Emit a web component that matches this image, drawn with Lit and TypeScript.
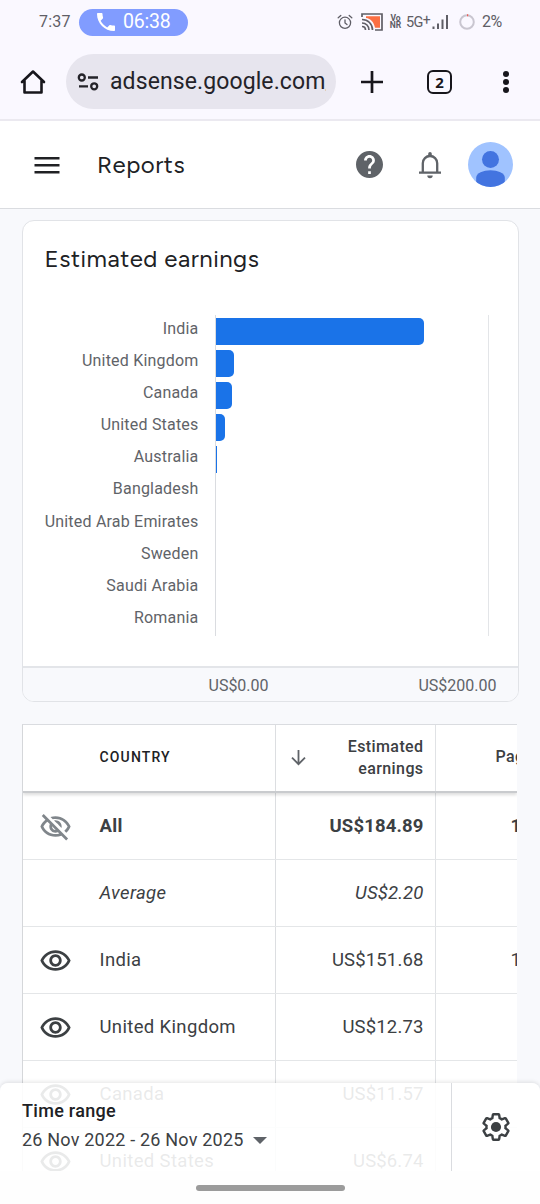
import { LitElement, html, css, svg } from "lit";
import { customElement } from "lit/decorators.js";

const EYE = "M12 6c3.79 0 7.17 2.13 8.82 5.5C19.17 14.87 15.79 17 12 17s-7.17-2.13-8.82-5.5C4.83 8.13 8.21 6 12 6m0-2C7 4 2.73 7.11 1 11.5 2.73 15.89 7 19 12 19s9.27-3.11 11-7.5C21.27 7.11 17 4 12 4zm0 5c1.38 0 2.5 1.12 2.5 2.5S13.38 14 12 14s-2.5-1.12-2.5-2.5S10.62 9 12 9m0-2c-2.48 0-4.5 2.02-4.5 4.5S9.52 16 12 16s4.5-2.02 4.5-4.5S14.48 7 12 7z";
const EYE_OFF = "M12 6c3.79 0 7.17 2.13 8.82 5.5-.59 1.22-1.42 2.27-2.41 3.12l1.41 1.41c1.39-1.23 2.49-2.77 3.18-4.53C21.27 7.11 17 4 12 4c-1.27 0-2.49.2-3.64.57l1.65 1.65C10.66 6.09 11.32 6 12 6zm-1.07 1.14L13 9.21c.57.25 1.03.71 1.28 1.28l2.07 2.07c.08-.34.14-.7.14-1.07C16.5 9.01 14.48 7 12 7c-.37 0-.72.05-1.07.14zM2.01 3.87l2.68 2.68C3.06 7.83 1.77 9.53 1 11.5 2.73 15.89 7 19 12 19c1.52 0 2.98-.29 4.32-.82l3.42 3.42 1.41-1.41L3.42 2.45 2.01 3.87zm7.5 7.5l2.61 2.61c-.04.01-.08.02-.12.02-1.38 0-2.5-1.12-2.5-2.5 0-.05.01-.08.01-.13zm-3.4-3.4l1.75 1.75c-.23.55-.36 1.15-.36 1.78 0 2.48 2.02 4.5 4.5 4.5.63 0 1.23-.13 1.77-.36l.98.98c-.88.24-1.8.38-2.75.38-3.79 0-7.17-2.13-8.82-5.5.7-1.43 1.72-2.61 2.93-3.53z";
const GEAR = "M19.43 12.98c.04-.32.07-.64.07-.98 0-.34-.03-.66-.07-.98l2.11-1.65c.19-.15.24-.42.12-.64l-2-3.46c-.09-.16-.26-.25-.44-.25-.06 0-.12.01-.17.03l-2.49 1c-.52-.4-1.08-.73-1.69-.98l-.38-2.65C14.46 2.18 14.25 2 14 2h-4c-.25 0-.46.18-.49.42l-.38 2.65c-.61.25-1.17.59-1.69.98l-2.49-1c-.06-.02-.12-.03-.18-.03-.17 0-.34.09-.43.25l-2 3.46c-.13.22-.07.49.12.64l2.11 1.65c-.04.32-.07.65-.07.98 0 .33.03.66.07.98l-2.11 1.65c-.19.15-.24.42-.12.64l2 3.46c.09.16.26.25.44.25.06 0 .12-.01.17-.03l2.49-1c.52.4 1.08.73 1.69.98l.38 2.65c.03.24.24.42.49.42h4c.25 0 .46-.18.49-.42l.38-2.65c.61-.25 1.17-.59 1.69-.98l2.49 1c.06.02.12.03.18.03.17 0 .34-.09.43-.25l2-3.46c.12-.22.07-.49-.12-.64l-2.11-1.65z";

@customElement("status-bar")
class StatusBar extends LitElement {
  static styles = css`
    :host { display: flex; align-items: center; height: 44px; padding-left: 39px; color: #5f5e66; font: 16px/20px Roboto, sans-serif; }
    .time { width: 40px; letter-spacing: 0.2px; }
    .call { display: flex; align-items: center; width: 109px; height: 27px; box-sizing: border-box; padding-left: 17px; gap: 7px; border-radius: 14px; background: #819cff; color: #fff; font-size: 19.5px; letter-spacing: -0.2px; }
    .icons { display: flex; align-items: center; margin-left: 149px; }
    .alarm { margin-right: 8px; }
    .vonr { margin-left: 6px; width: 13px; font-size: 8.5px; line-height: 7px; font-weight: 700; text-align: center; }
    .net { margin-left: 4px; font-size: 14.5px; letter-spacing: -0.7px; width: 26px; white-space: nowrap; }
    .plus { font-size: 14px; position: relative; top: -2px; }
    .ring { margin-left: 10px; }
    .pct { margin-left: 7px; font-size: 16px; letter-spacing: -0.4px; }
    svg { display: block; }
  `;
  render() {
    return html`
      <span class="time">7:37</span>
      <span class="call">
        <svg width="20" height="20" viewBox="2 2 20 20" fill="#fff"><path d="M6.62 10.79c1.44 2.83 3.76 5.14 6.59 6.59l2.2-2.2c.27-.27.67-.36 1.02-.24 1.12.37 2.33.57 3.57.57.55 0 1 .45 1 1V20c0 .55-.45 1-1 1-9.39 0-17-7.61-17-17 0-.55.45-1 1-1h3.5c.55 0 1 .45 1 1 0 1.25.2 2.45.57 3.57.11.35.03.74-.25 1.02l-2.2 2.2z"/></svg>
        <span>06:38</span>
      </span>
      <div class="icons">
        <svg class="alarm" width="16" height="16" viewBox="0 0 16 16" fill="none" stroke="#5f5e66" stroke-width="1.3" stroke-linecap="round"><circle cx="8" cy="8.8" r="5.6"/><path d="M8 5.8v3.2l2 1.6M1.2 3.8l2.6-2.3M14.8 3.8l-2.6-2.3"/></svg>
        <svg width="22" height="18" viewBox="0 0 22 18" fill="none" stroke="#5f5e66" stroke-width="1.7"><path d="M5 3.2h14v11.6h-5C13 9 9.500 5.500 5 5z" fill="#fb6f43" stroke="none"/><path d="M1 4V1h20v16h-7"/><path d="M1 6.500c6 0 10.500 4.500 10.500 10.500M1 10c4 0 7 3 7 7M1 13.500c2 0 3.500 1.500 3.500 3.500"/></svg>
        <span class="vonr">Vo<br>NR</span>
        <span class="net">5G<span class="plus">+</span></span>
        <svg width="17" height="16" viewBox="0 0 17 16" fill="#5f5e66"><path d="M.5 12.500h2V15h-2zM5 9.500h2V15H5zM9.500 5.500h2V15h-2zM14 1h2v14h-2z"/></svg>
        <svg class="ring" width="16" height="16" viewBox="0 0 16 16" fill="none" stroke-width="2"><circle cx="8" cy="8" r="6.800" stroke="#c9c6d0"/><path d="M8 1.200h1.200" stroke="#ef5a55"/></svg>
        <span class="pct">2%</span>
      </div>
    `;
  }
}

@customElement("browser-bar")
class BrowserBar extends LitElement {
  static styles = css`
    :host { display: flex; align-items: center; height: 77px; border-bottom: 2px solid #ebe9f0; box-sizing: border-box; padding-left: 20px; }
    svg { display: block; flex: none; }
    .url { display: flex; align-items: center; box-sizing: border-box; width: 270px; height: 55px; margin-left: 20px; padding: 0 10px 0 11px; gap: 10px; border-radius: 28px; background: #e7e5ee; }
    .text { flex: 1; overflow: hidden; white-space: nowrap; color: #242329; font: 23px/32px Roboto, sans-serif; letter-spacing: 0.1px; }
    .plus { margin-left: 24px; }
    .tabs { margin-left: 43px; width: 21px; height: 20px; border: 2.5px solid #17161c; border-radius: 6px; font: 700 15px/20px "Noto Sans", sans-serif; text-align: center; color: #17161c; }
    .dots { margin-left: 50px; }
  `;
  render() {
    return html`
      <svg width="26" height="26" viewBox="0 0 26 26" fill="none" stroke="#17161c" stroke-width="2.600" stroke-linejoin="round" stroke-linecap="round"><path d="M2 13 13 2.500 24 13M4.500 11.500v12h17v-12"/></svg>
      <div class="url">
        <svg width="23" height="18" viewBox="0 0 23 18" fill="none" stroke="#242329" stroke-width="2.300"><circle cx="4.800" cy="4.500" r="3"/><path d="M11 4.500h10M2 13.300h9"/><circle cx="17.200" cy="13.300" r="3"/></svg>
        <span class="text">adsense.google.com/adsense</span>
      </div>
      <svg class="plus" width="24" height="24" viewBox="0 0 24 24" stroke="#17161c" stroke-width="2.700"><path d="M12 1v22M1 12h22"/></svg>
      <div class="tabs">2</div>
      <svg class="dots" width="8" height="24" viewBox="0 0 8 24" fill="#17161c"><circle cx="4" cy="4" r="3"/><circle cx="4" cy="12" r="3"/><circle cx="4" cy="20" r="3"/></svg>
    `;
  }
}

@customElement("page-header")
class PageHeader extends LitElement {
  static styles = css`
    :host { display: flex; align-items: center; height: 88px; box-sizing: border-box; border-bottom: 1px solid #dadce0; background: #fff; padding: 0 27px 0 34px; }
    svg { display: block; }
    h1 { flex: 1; margin: 0 0 0 37px; font: 400 24px/32px Figtree, Lato, sans-serif; color: #202124; letter-spacing: 0.5px; }
    .bell { margin: 0 24px 0 33px; }
  `;
  render() {
    return html`
      <svg width="26" height="18" viewBox="0 0 26 18" fill="#202124"><path d="M.5 1h25v2.500H.5zM.5 8h25v2.500H.5zM.5 15h25v2.500H.5z"/></svg>
      <h1>Reports</h1>
      <svg width="27" height="27" viewBox="2 2 20 20" fill="#5f6368"><path d="M12 2C6.480 2 2 6.480 2 12s4.480 10 10 10 10-4.480 10-10S17.520 2 12 2zm1 17h-2v-2h2v2zm2.070-7.750l-.9.920C13.450 12.900 13 13.500 13 15h-2v-.5c0-1.100.45-2.100 1.170-2.830l1.240-1.260c.37-.36.59-.86.59-1.410 0-1.100-.9-2-2-2s-2 .9-2 2H8c0-2.210 1.790-4 4-4s4 1.790 4 4c0 .88-.36 1.680-.93 2.250z"/></svg>
      <svg class="bell" width="28" height="28" viewBox="0 0 28 28" fill="none" stroke="#5f6368" stroke-width="2.300"><path d="M3 21.700h22M6.800 21.500v-9.300a7.200 7.200 0 0 1 14.400 0v9.300"/><path d="M11.300 24.600h5.400a2.700 2.600 0 0 1-5.400 0zM12.200 5V2.800a1.800 1.800 0 0 1 3.600 0V5z" fill="#5f6368" stroke="none"/></svg>
      <svg width="45" height="45" viewBox="0 0 44 44"><clipPath id="c"><circle cx="22" cy="22" r="22"/></clipPath><g clip-path="url(#c)"><path d="M0 0h44v44H0z" fill="#a0c3ff"/><circle cx="22" cy="17" r="8.300" fill="#4374e0"/><path d="M8 35c0-4.500 7-7.300 14-7.300S36 30.500 36 35v9H8z" fill="#4374e0"/></g></svg>
    `;
  }
}

@customElement("earnings-card")
class EarningsCard extends LitElement {
  static styles = css`
    :host { display: block; box-sizing: border-box; width: 497px; height: 482px; border: 1.500px solid #e1e3e7; border-radius: 12px; background: #fff; overflow: hidden; }
    h2 { margin: 0; padding: 22px 0 0 22px; height: 72px; font: 400 24px/32px Figtree, Lato, sans-serif; color: #202124; letter-spacing: 0.5px; }
    .plot { display: grid; grid-template-columns: 192px 274px; height: 350.500px; box-sizing: border-box; align-content: start; }
    .labels { display: grid; grid-auto-rows: 32.100px; padding-right: 16px; text-align: right; font: 16px/27px Roboto, sans-serif; color: #5f6368; letter-spacing: 0.2px; white-space: nowrap; }
    .bars { display: grid; grid-auto-rows: 32.100px; border-left: 1.500px solid #dadce0; border-right: 1.500px solid #e3e5e8; }
    .bar { display: block; margin-top: 2.500px; height: 27.500px; background: #1a73e8; border-radius: 0 5px 5px 0; }
    .thin { border-radius: 0; }
    .axis { display: flex; justify-content: space-between; border-top: 2px solid #e3e5e9; height: 34px; padding: 0 21px 0 186px; background: #f8f9fc; font: 16px/35px Roboto, sans-serif; color: #5f6368; }
  `;
  rows: [string, number][] = [["India", 208], ["United Kingdom", 18], ["Canada", 16.500], ["United States", 9.500], ["Australia", 1.500], ["Bangladesh", 0], ["United Arab Emirates", 0], ["Sweden", 0], ["Saudi Arabia", 0], ["Romania", 0]];
  render() {
    return html`
      <h2>Estimated earnings</h2>
      <div class="chart">
        <div class="plot">
          <div class="labels">${this.rows.map(([n]) => html`<span>${n}</span>`)}</div>
          <div class="bars">${this.rows.map(([, w]) => html`<div><span class="bar ${w < 3 ? "thin" : ""}" style="width:${w}px"></span></div>`)}</div>
        </div>
      </div>
      <div class="axis"><span>US$0.00</span><span>US$200.00</span></div>
    `;
  }
}

@customElement("country-table")
class CountryTable extends LitElement {
  static styles = css`
    :host { display: block; box-sizing: border-box; width: 495px; height: 481px; overflow: hidden; background: #fff; border-left: 1px solid #d5d7da; border-top: 1px solid #dadce0; font: 18.500px/24px Roboto, sans-serif; color: #3c4043; }
    .row { display: grid; grid-template-columns: 66px 187px 160px 180px; height: 67px; box-sizing: border-box; border-bottom: 1.500px solid #e4e6e8; align-items: stretch; letter-spacing: 0.350px; }
    .row > * { display: flex; align-items: center; box-sizing: border-box; }
    .icon { justify-content: center; }
    .name { padding-left: 11px; border-right: 1.500px solid #dcdee1; }
    .money { justify-content: flex-end; padding-right: 11px; border-right: 1.500px solid #e0e2e5; letter-spacing: 0.150px; }
    .next { padding-left: 75px; }
    .all { font-weight: 700; }
    .average { font-style: italic; }
    .head { height: 68.500px; border-bottom: 2px solid #c9cbce; box-shadow: 0 2px 3px #0002; position: relative; }
    .head .name { font-size: 14px; font-weight: 500; letter-spacing: 1.150px; color: #202124; padding-bottom: 2px; }
    .head .money { justify-content: space-between; padding-left: 14px; font-size: 16px; font-weight: 500; line-height: 22px; text-align: right; letter-spacing: 0.400px; }
    .head .next { font-size: 16px; font-weight: 500; padding-left: 60px; padding-bottom: 2px; letter-spacing: 0.400px; }
    svg { display: block; }
  `;
  rows = [
    ["all", "off", "All", "US$184.89", "1,204"],
    ["average", "", "Average", "US$2.20", ""],
    ["", "on", "India", "US$151.68", "1"],
    ["", "on", "United Kingdom", "US$12.73", ""],
    ["", "on", "Canada", "US$11.57", ""],
    ["", "on", "United States", "US$6.74", ""],
  ];
  eye(kind: string) {
    if (!kind) return "";
    return html`<svg width="33" height="33" viewBox="0 -.5 24 24">${kind === "off" ? svg`<path fill="#80868b" d=${EYE_OFF} />` : svg`<path fill="#3c4043" d=${EYE} />`}</svg>`;
  }
  render() {
    return html`
      <div class="row head">
        <div></div>
        <div class="name">COUNTRY</div>
        <div class="money">
          <svg width="17" height="17" viewBox="0 0 17 17" fill="none" stroke="#5f6368" stroke-width="1.800"><path d="M8.500 1v14M2 8.700l6.500 6.500L15 8.700"/></svg>
          <span>Estimated<br>earnings</span>
        </div>
        <div class="next">Page views</div>
      </div>
      ${this.rows.map(([cls, kind, name, money, next]) => html`
        <div class="row ${cls}">
          <div class="icon">${this.eye(kind)}</div>
          <div class="name">${name}</div>
          <div class="money">${money}</div>
          <div class="next">${next}</div>
        </div>`)}
    `;
  }
}

@customElement("time-panel")
class TimePanel extends LitElement {
  static styles = css`
    :host { display: flex; flex-direction: column; height: 121px; font-family: Roboto, sans-serif; }
    .main { display: flex; height: 88px; border-radius: 8px 8px 0 0; background: #ffffffe3; box-shadow: 0 -1px 4px #0000001c; }
    .range { width: 429px; padding: 16px 0 0 22px; border-right: 1px solid #dadce0; }
    .title { font-size: 18px; line-height: 24px; font-weight: 500; color: #202124; letter-spacing: 0.300px; }
    .value { display: flex; align-items: center; gap: 9px; margin-top: 5px; font-size: 18px; line-height: 24px; color: #3c4043; letter-spacing: 0.200px; }
    .gear { flex: 1; display: flex; align-items: center; justify-content: center; }
    .nav { display: flex; height: 33px; background: #fefefe; justify-content: center; padding-top: 14px; box-sizing: border-box; }
    .pill { width: 149px; height: 6px; border-radius: 3px; background: #9b9b9b; }
  `;
  render() {
    return html`
      <div class="main">
        <div class="range">
          <div class="title">Time range</div>
          <div class="value"><span>26 Nov 2022 - 26 Nov 2025</span><svg width="14" height="7" viewBox="0 0 14 7"><path d="M0 0h14L7 7z" fill="#5f6368"/></svg></div>
        </div>
        <div class="gear">
          <svg width="28" height="28" viewBox="1 1 22 22"><path d=${GEAR} fill="none" stroke="#3c4043" stroke-width="1.900"/><circle cx="12" cy="12" r="4" fill="#3c4043"/></svg>
        </div>
      </div>
      <div class="nav"><div class="pill"></div></div>
    `;
  }
}

@customElement("app-root")
class AppRoot extends LitElement {
  static styles = css`
    :host { display: block; position: relative; width: 540px; height: 1204px; overflow: hidden; background: #f8f9fc; }
    .browser { background: #faf8ff; }
    .content { display: flex; flex-direction: column; gap: 21.500px; padding: 11px 0 0 21.500px; }
    .panel { position: absolute; left: 0; right: 0; bottom: 0; }
  `;
  render() {
    return html`
      <div class="browser"><status-bar></status-bar><browser-bar></browser-bar></div>
      <page-header></page-header>
      <div class="content"><earnings-card></earnings-card><country-table></country-table></div>
      <time-panel class="panel"></time-panel>
    `;
  }
}
